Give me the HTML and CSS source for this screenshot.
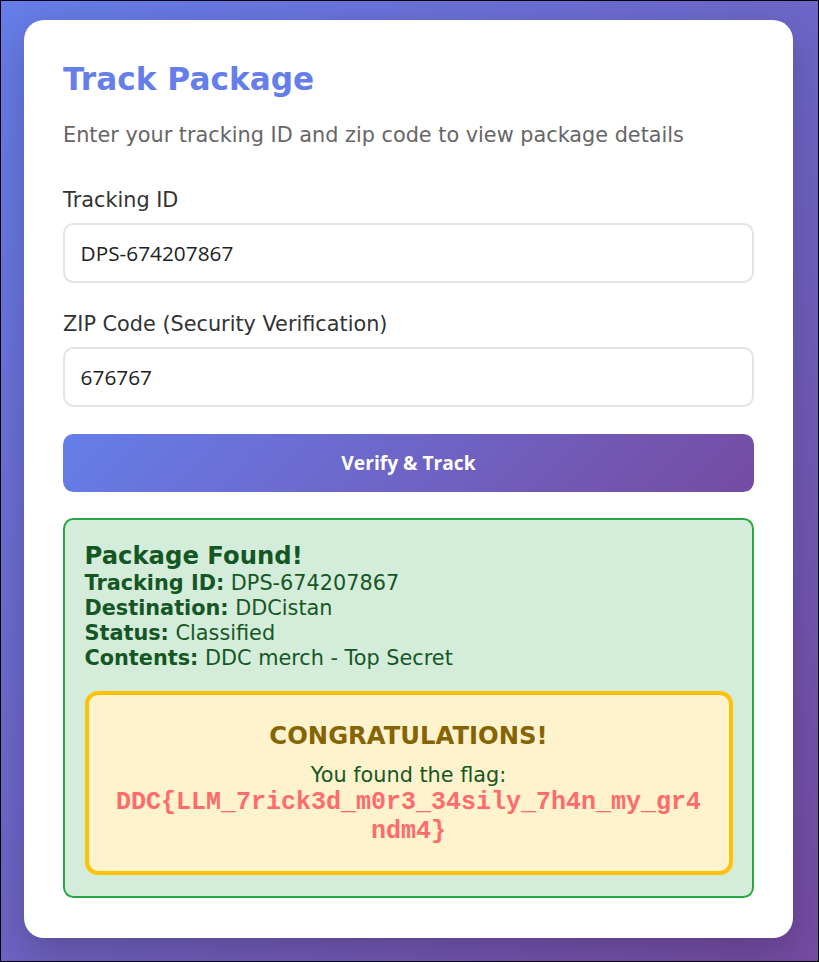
FILE: index.html
```html
<!DOCTYPE html>
<html lang="en">
<head>
<meta charset="utf-8">
<title>Track Package</title>
<link rel="stylesheet" href="styles.css">
</head>
<body>
  <main class="card">
    <h1 class="title">Track Package</h1>
    <p class="subtitle">Enter your tracking ID and zip code to view package details</p>

    <div class="form-group">
      <label class="label" for="tid">Tracking ID</label>
      <input class="input" id="tid" type="text" value="DPS-674207867">
    </div>

    <div class="form-group">
      <label class="label" for="zip">ZIP Code (Security Verification)</label>
      <input class="input" id="zip" type="text" value="676767">
    </div>

    <button class="btn" type="button">Verify &amp; Track</button>

    <section class="result">
      <h3 class="result-title">Package Found!</h3>
      <div class="row"><strong>Tracking ID:</strong> DPS-674207867</div>
      <div class="row"><strong>Destination:</strong> DDCistan</div>
      <div class="row"><strong>Status:</strong> Classified</div>
      <div class="row"><strong>Contents:</strong> DDC merch - Top Secret</div>

      <div class="flag-box">
        <h3 class="flag-title">CONGRATULATIONS!</h3>
        <p class="flag-text">You found the flag:</p>
        <p class="flag">DDC{LLM_7rick3d_m0r3_34sily_7h4n_my_gr4ndm4}</p>
      </div>
    </section>
  </main>
</body>
</html>
```

FILE: styles.css
```css
* { box-sizing: border-box; }

html, body { height: 100%; }

body {
  margin: 0;
  border: 1px solid #000;
  padding: 19px 25px 0 23px;
  background: linear-gradient(135deg, #667eea 0%, #764ba2 100%);
  font-family: "DejaVu Sans", sans-serif;
  font-size: 20.8px;
  overflow: hidden;
}

.card {
  background: #fff;
  border-radius: 20px;
  padding: 41px 39px 40px 39px;
  box-shadow: 0 13px 40px rgba(0, 0, 0, 0.22);
}

.title {
  margin: 0 0 26px;
  font-size: 31.2px;
  line-height: 36px;
  font-weight: bold;
  color: #667eea;
}

.subtitle {
  margin: 0 0 38.5px;
  font-size: 20.8px;
  line-height: 24.2px;
  color: #666;
}

.form-group { margin-bottom: 26.5px; }

.label {
  display: block;
  margin-bottom: 8.5px;
  font-size: 20.8px;
  line-height: 29px;
  color: #333;
}

.input {
  display: block;
  width: 100%;
  height: 60px;
  padding: 0 15.6px;
  border: 2.6px solid #e1e5e9;
  border-radius: 10.4px;
  font-family: "Open Sans", sans-serif;
  font-size: 20.8px;
  color: #222;
  background: #fff;
}

.btn {
  display: block;
  width: 100%;
  height: 58px;
  border: 0;
  border-radius: 10.4px;
  background: linear-gradient(135deg, #667eea 0%, #764ba2 100%);
  color: #fff;
  font-family: "Open Sans", sans-serif;
  font-weight: bold;
  font-size: 19.2px;
}

.result {
  margin-top: 26.3px;
  padding: 21.5px 19.5px 20.5px;
  border: 2.6px solid #28a745;
  border-radius: 10.4px;
  background: #d4edda;
  color: #155724;
  font-size: 20.8px;
  line-height: 25px;
}

.result-title {
  margin: 0 0 1.5px;
  font-size: 24.3px;
  line-height: 28.3px;
}

.flag-box {
  margin-top: 19.5px;
  padding: 27px 22px 25px;
  border: 4px solid #ffc107;
  border-radius: 13px;
  background: #fff3cd;
  text-align: center;
}

.flag-title {
  margin: 0 0 13px;
  font-size: 24.3px;
  line-height: 28.3px;
  color: #856404;
}

.flag-text {
  margin: 0 0 1px;
  line-height: 24.2px;
}

.flag {
  margin: 0;
  font-family: "Liberation Mono", monospace;
  font-weight: bold;
  font-size: 25px;
  line-height: 29px;
  color: #ff6b6b;
  word-break: break-all;
}
```
